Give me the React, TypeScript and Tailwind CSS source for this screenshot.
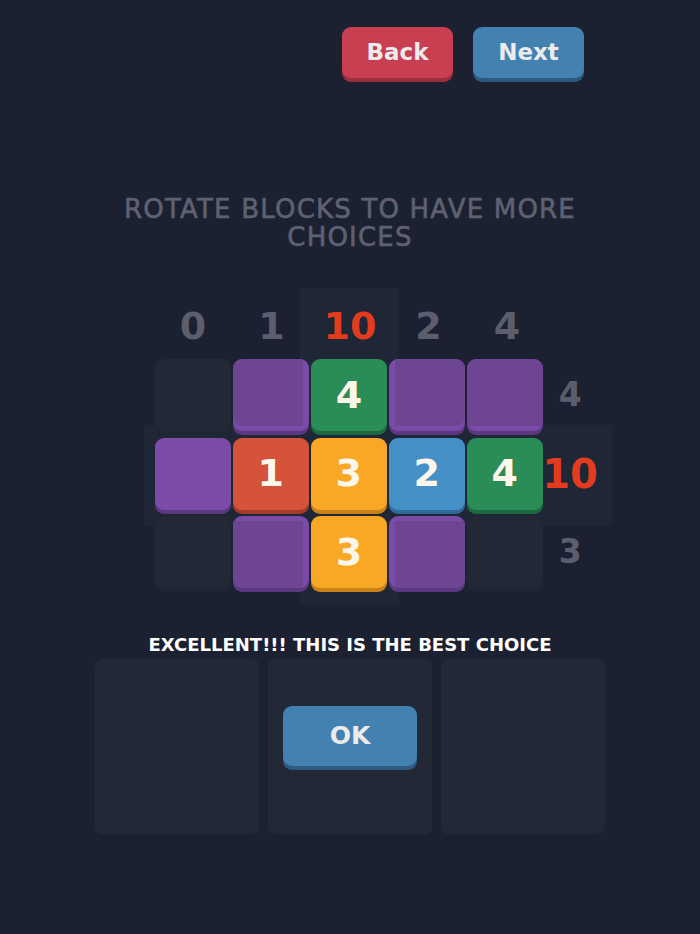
import React from "react";

type Cell =
  | { kind: "empty" }
  | { kind: "num"; value: number; color: string }
  | { kind: "purple"; inset?: string };

const FONT = { fontFamily: '"DejaVu Sans", "Noto Sans", sans-serif' };

const colors: Record<string, { bg: string; shadow: string }> = {
  red: { bg: "bg-[#d5533b]", shadow: "shadow-[0_4px_0_#a53c2a]" },
  orange: { bg: "bg-[#f9a826]", shadow: "shadow-[0_4px_0_#c9821a]" },
  blue: { bg: "bg-[#4590c6]", shadow: "shadow-[0_4px_0_#2f6a98]" },
  green: { bg: "bg-[#2a8d57]", shadow: "shadow-[0_4px_0_#1e6a40]" },
};

const grid: Cell[][] = [
  [
    { kind: "empty" },
    { kind: "purple", inset: "top-0 left-0 right-[6px] bottom-[5px] rounded-tl-[9px] rounded-bl-[9px]" },
    { kind: "num", value: 4, color: "green" },
    { kind: "purple", inset: "top-0 left-[6px] right-0 bottom-[5px] rounded-tr-[9px] rounded-br-[9px]" },
    { kind: "purple", inset: "top-0 left-0 right-0 bottom-[5px] rounded-t-[9px]" },
  ],
  [
    { kind: "purple" },
    { kind: "num", value: 1, color: "red" },
    { kind: "num", value: 3, color: "orange" },
    { kind: "num", value: 2, color: "blue" },
    { kind: "num", value: 4, color: "green" },
  ],
  [
    { kind: "empty" },
    { kind: "purple", inset: "top-[5px] left-0 right-[6px] bottom-0 rounded-bl-[9px]" },
    { kind: "num", value: 3, color: "orange" },
    { kind: "purple", inset: "top-[5px] left-[6px] right-0 bottom-0 rounded-br-[9px]" },
    { kind: "empty" },
  ],
];

const colHeads = [
  { v: "0", hot: false },
  { v: "1", hot: false },
  { v: "10", hot: true },
  { v: "2", hot: false },
  { v: "4", hot: false },
];

const rowHeads = [
  { v: "4", hot: false },
  { v: "10", hot: true },
  { v: "3", hot: false },
];

function Tile({ cell }: { cell: Cell }) {
  if (cell.kind === "empty") {
    return (
      <div className="w-[76px] h-[76px]">
        <div className="h-[72px] rounded-[9px] bg-[#222836] shadow-[0_4px_0_#1f2533]" />
      </div>
    );
  }
  if (cell.kind === "purple") {
    return (
      <div className="w-[76px] h-[76px]">
        <div className="relative h-[72px] rounded-[9px] bg-[#7b4ca7] shadow-[0_4px_0_#5b3880] overflow-hidden">
          {cell.inset && <div className={`absolute bg-[#6d4592] ${cell.inset}`} />}
        </div>
      </div>
    );
  }
  const c = colors[cell.color];
  return (
    <div className="w-[76px] h-[76px]">
      <div
        className={`h-[72px] rounded-[9px] ${c.bg} ${c.shadow} flex items-center justify-center text-[38px] font-bold text-[#fdf6ea]`}
      >
        {cell.value}
      </div>
    </div>
  );
}

function Button({ label, kind, className }: { label: string; kind: "red" | "blue"; className: string }) {
  const tone =
    kind === "red"
      ? "bg-[#c93f52] shadow-[0_4px_0_#9c2f3e]"
      : "bg-[#4281b0] shadow-[0_4px_0_#2c5a80]";
  return (
    <button className={`${tone} ${className} rounded-[9px] font-bold text-[#ebebeb] flex items-center justify-center`}>
      {label}
    </button>
  );
}

export default function App() {
  return (
    <main className="min-h-screen h-[934px] w-[700px] bg-[#1b2130] overflow-hidden" style={FONT}>
      <div className="flex gap-[20px] pl-[342px] pt-[27px]">
        <Button label="Back" kind="red" className="w-[111px] h-[51px] text-[23px]" />
        <Button label="Next" kind="blue" className="w-[111px] h-[51px] text-[23px]" />
      </div>

      <h1 className="mt-[117px] text-center text-[26px] leading-[28px] text-[#5f6071] tracking-[1.2px] [-webkit-text-stroke:0.6px_#5f6071]">
        ROTATE BLOCKS TO HAVE MORE
        <br />
        CHOICES
      </h1>

      <div className="relative mt-[50px] ml-[155px] w-[440px]">
        {/* highlight bands */}
        <div className="absolute left-[145px] top-[-13px] w-[99px] h-[317px] bg-[#1f2635]" />
        <div className="absolute left-[-11px] top-[124px] w-[468px] h-[101px] bg-[#1f2635]" />

        <div className="relative flex flex-col">
          <div className="flex gap-[2.5px] h-[50px] items-center">
            {colHeads.map((h, i) => (
              <div
                key={i}
                className={`w-[76px] text-center text-[38px] font-bold ${h.hot ? "text-[#e23b1d]" : "text-[#5d5e6d]"}`}
              >
                {h.v}
              </div>
            ))}
          </div>
          <div className="mt-[8px] flex flex-col gap-[2.5px]">
            {grid.map((row, r) => (
              <div key={r} className="flex gap-[2.5px] items-start">
                {row.map((cell, c) => (
                  <Tile key={c} cell={cell} />
                ))}
                <div
                  className={`w-[50px] h-[72px] flex items-center justify-center font-bold ${
                    rowHeads[r].hot ? "text-[#e23b1d] text-[40px]" : "text-[#5d5e6d] text-[33px]"
                  }`}
                >
                  {rowHeads[r].v}
                </div>
              </div>
            ))}
          </div>
        </div>
      </div>

      <p className="mt-[41px] text-center text-[18px] leading-[24px] font-semibold text-white">
        EXCELLENT!!! THIS IS THE BEST CHOICE
      </p>

      <div className="mt-[2px] ml-[95px] flex gap-[9px]">
        <div className="w-[164px] h-[175px] rounded-[7px] bg-[#222836]" />
        <div className="w-[164px] h-[175px] rounded-[7px] bg-[#222836] pt-[47px] px-[15px]">
          <Button label="OK" kind="blue" className="w-[134px] h-[60px] text-[25px]" />
        </div>
        <div className="w-[164px] h-[175px] rounded-[7px] bg-[#222836]" />
      </div>
    </main>
  );
}
